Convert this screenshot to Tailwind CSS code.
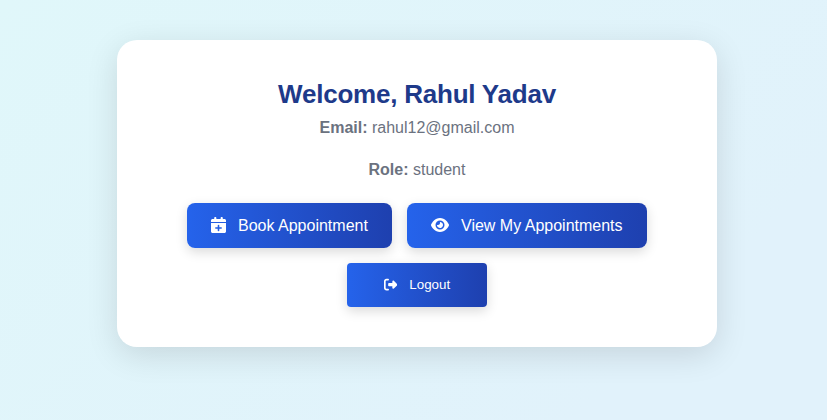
<!DOCTYPE html>
<html lang="en">
<head>
<meta charset="utf-8">
<title>Dashboard</title>
<script src="https://cdn.jsdelivr.net/npm/@tailwindcss/browser@4"></script>
</head>
<body class="h-[420px] overflow-hidden bg-linear-[135deg,#e0f7fa,#e1f2fb_80%] pt-10 pl-[117px] font-['Liberation_Sans',Arial,sans-serif]">
<main class="flex h-[307px] w-[600px] flex-col items-center rounded-[20px] bg-white pt-[38px] text-center text-[#6b7280] shadow-[0_8px_32px_rgba(0,0,0,0.12)]">
  <h1 class="text-[26px] leading-8 font-bold tracking-[-0.22px] whitespace-nowrap text-[#1e3a8a]">Welcome, Rahul Yadav</h1>
  <p class="mt-[6px] text-base leading-6"><strong>Email:</strong> rahul12@gmail.com</p>
  <p class="mt-[18px] text-base leading-6"><strong>Role:</strong> student</p>
  <div class="mt-[21px] flex gap-[15px] text-base text-white">
    <button class="flex h-[45px] w-[205px] items-center rounded-[8px] bg-linear-to-r from-[#2563eb] to-[#1e40af] pl-6 whitespace-nowrap shadow-[0_4px_12px_rgba(0,0,0,0.15)]">
      <svg class="mr-3 mb-px h-[16px] w-[15px] shrink-0" viewBox="0 0 448 512" preserveAspectRatio="none" fill="currentColor"><path d="M96 32V64H48C21.5 64 0 85.5 0 112v48H448V112c0-26.5-21.5-48-48-48H352V32c0-17.7-14.3-32-32-32s-32 14.3-32 32V64H160V32c0-17.7-14.3-32-32-32S96 14.3 96 32zM448 192H0V464c0 26.5 21.5 48 48 48H400c26.5 0 48-21.5 48-48V192zM224 248c13.3 0 24 10.7 24 24v56h56c13.3 0 24 10.7 24 24s-10.7 24-24 24H248v56c0 13.3-10.7 24-24 24s-24-10.7-24-24V376H144c-13.3 0-24-10.7-24-24s10.7-24 24-24h56V272c0-13.3 10.7-24 24-24z"/></svg>Book Appointment
    </button>
    <button class="flex h-[45px] w-[240px] items-center rounded-[8px] bg-linear-to-r from-[#2563eb] to-[#1e40af] pl-6 whitespace-nowrap shadow-[0_4px_12px_rgba(0,0,0,0.15)]">
      <svg class="mr-3 mb-px h-4 w-[18px] shrink-0" viewBox="0 0 576 512" fill="currentColor"><path d="M288 32c-80.8 0-145.5 36.8-192.6 80.6C48.6 156 17.3 208 2.5 243.7c-3.3 7.9-3.3 16.7 0 24.6C17.3 304 48.6 356 95.4 399.4C142.5 443.2 207.2 480 288 480s145.5-36.8 192.6-80.6c46.8-43.5 78.1-95.4 93-131.1c3.3-7.9 3.3-16.7 0-24.6c-14.9-35.7-46.2-87.7-93-131.1C433.5 68.8 368.8 32 288 32zM144 256a144 144 0 1 1 288 0 144 144 0 1 1 -288 0zm144-64c0 35.3-28.7 64-64 64c-7.1 0-13.9-1.2-20.3-3.3c-5.5-1.8-11.9 1.6-11.7 7.4c.3 6.9 1.3 13.8 3.2 20.7c13.7 51.2 66.4 81.6 117.6 67.9s81.6-66.4 67.9-117.6c-11.1-41.5-47.8-69.4-88.6-71.1c-5.8-.2-9.2 6.1-7.4 11.7c2.1 6.4 3.3 13.2 3.3 20.3z"/></svg>View My Appointments
    </button>
  </div>
  <button class="mt-[15px] flex h-[44px] w-[140px] items-center rounded-[4px] bg-linear-to-r from-[#2563eb] to-[#1e40af] pl-[37px] text-[13.333px] whitespace-nowrap text-white shadow-[0_4px_12px_rgba(0,0,0,0.15)]">
    <svg class="mr-3 mb-px size-[13.333px] shrink-0" viewBox="0 0 512 512" fill="currentColor"><path d="M377.9 105.9L500.7 228.7c7.2 7.2 11.3 17.1 11.3 27.3s-4.1 20.1-11.3 27.3L377.9 406.1c-6.4 6.4-15 9.9-24 9.9c-18.7 0-33.9-15.2-33.9-33.9l0-62.1-128 0c-17.7 0-32-14.3-32-32l0-64c0-17.7 14.3-32 32-32l128 0 0-62.1c0-18.7 15.2-33.9 33.9-33.9c9 0 17.6 3.6 24 9.9zM160 96L96 96c-17.7 0-32 14.3-32 32l0 256c0 17.7 14.3 32 32 32l64 0c17.7 0 32 14.3 32 32s-14.3 32-32 32l-64 0c-53 0-96-43-96-96L0 128C0 75 43 32 96 32l64 0c17.7 0 32 14.3 32 32s-14.3 32-32 32z"/></svg>Logout
  </button>
</main>
</body>
</html>
